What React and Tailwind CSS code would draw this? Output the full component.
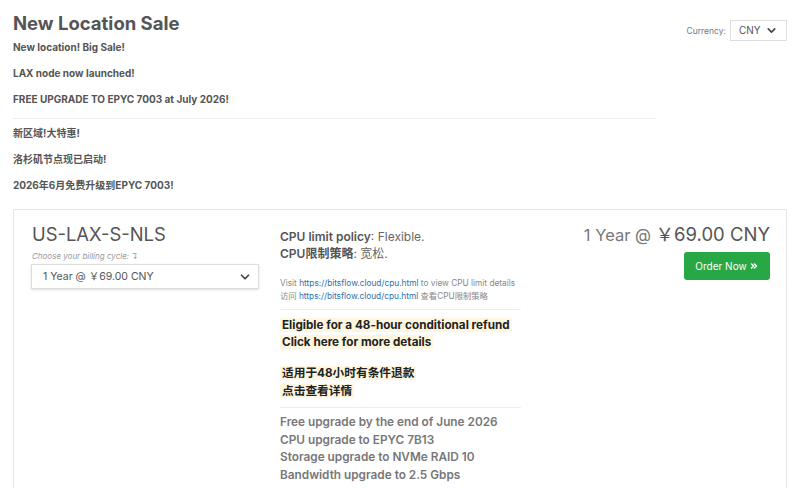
import React from 'react';
import { ChevronDown, ChevronsRight } from 'lucide-react';

const font = { fontFamily: 'Inter, "Noto Sans CJK SC", sans-serif' };

const App = () => {
  return (
    <div className="min-h-screen bg-white text-[#555] px-[13px] pt-[10px] overflow-hidden" style={font}>
      <div className="flex justify-between">
        <div className="w-[643px]">
          <h1 className="text-[18.5px] font-bold leading-[26px] text-[#555]">New Location Sale</h1>
          <div className="text-[10px] font-bold text-[#555] leading-[14px]">
            <p className="mt-[4px]">New location! Big Sale!</p>
            <p className="mt-[12px]">LAX node now launched!</p>
            <p className="mt-[12px]">FREE UPGRADE TO EPYC 7003 at July 2026!</p>
            <hr className="mt-[12px] border-t border-[#eee]" />
            <p className="mt-[7px]">新区域!大特惠!</p>
            <p className="mt-[12px]">洛杉矶节点现已启动!</p>
            <p className="mt-[12px]">2026年6月免费升级到EPYC 7003!</p>
          </div>
        </div>
        <div className="flex items-start gap-[4px] pt-[10px]">
          <span className="text-[8.5px] text-[#777] mt-[5px]">Currency:</span>
          <div className="w-[57px] h-[21px] border border-[#ddd] flex items-center justify-between px-[8px] text-[10px] text-[#555]">
            <span>CNY</span>
            <ChevronDown className="w-[13px] h-[13px] text-[#444]" strokeWidth={3} />
          </div>
        </div>
      </div>

      <div className="mt-[17px] border border-[#e5e5e5] rounded-[2px] pl-[18px] pr-[18px] pt-[11px] pb-[20px] flex">
        <div className="w-[228px] shrink-0 -ml-[1px]">
          <h2 className="text-[18.4px] text-[#555] leading-[26px] ml-[1px]">US-LAX-S-NLS</h2>
          <p className="text-[8px] italic text-[#999] mt-[4px] leading-[10px] ml-[1px]">Choose your billing cycle: ↴</p>
          <div className="mt-[3px] h-[25px] border border-[#ddd] shadow-sm flex items-center justify-between pl-[11px] pr-[6px] text-[10.5px] text-[#555]">
            <span>1 Year @ ￥69.00 CNY</span>
            <ChevronDown className="w-[14px] h-[14px] text-[#444]" strokeWidth={3} />
          </div>
        </div>

        <div className="w-[241px] shrink-0 ml-[21px] pt-[7px]">
          <p className="text-[12px] leading-[17px] text-[#666]">
            <span className="font-semibold text-[#555]">CPU limit policy</span>: Flexible.
          </p>
          <p className="text-[12px] leading-[17px] text-[#666]">
            <span className="font-semibold text-[#555]">CPU限制策略</span>: 宽松.
          </p>
          <div className="text-[8.3px] leading-[13px] text-[#888] mt-[15px]">
            <p>Visit <span className="text-[#2a6fb0]">https://bitsflow.cloud/cpu.html</span> to view CPU limit details</p>
            <p>访问 <span className="text-[#2a6fb0]">https://bitsflow.cloud/cpu.html</span> 查看CPU限制策略</p>
          </div>
          <hr className="mt-[6px] border-t border-[#eee]" />
          <div className="mt-[7px] text-[11.7px] font-bold text-[#222] leading-[17px]">
            <p><span className="bg-[#fff6e0] px-[2px]">Eligible for a 48-hour conditional refund</span></p>
            <p><span className="bg-[#fff6e0] px-[2px]">Click here for more details</span></p>
            <p className="mt-[13px] leading-[18px]"><span className="bg-[#fff6e0] px-[2px]">适用于48小时有条件退款</span></p>
            <p className="leading-[18px]"><span className="bg-[#fff6e0] px-[2px]">点击查看详情</span></p>
          </div>
          <hr className="mt-[7px] border-t border-[#eee]" />
          <div className="mt-[6px] text-[11.8px] font-semibold text-[#777] leading-[17.7px]">
            <p>Free upgrade by the end of June 2026</p>
            <p>CPU upgrade to EPYC 7B13</p>
            <p>Storage upgrade to NVMe RAID 10</p>
            <p>Bandwidth upgrade to 2.5 Gbps</p>
          </div>
        </div>

        <div className="flex-1 flex flex-col items-end pt-[1px] -mr-[2px]">
          <p className="text-[16.5px] leading-[24px] text-[#777]">
            1 Year @ <span className="text-[18.5px] text-[#555]">￥69.00 CNY</span>
          </p>
          <button className="mt-[5px] w-[86px] h-[28px] bg-[#28a745] rounded-[3px] text-white text-[10px] flex items-center justify-center gap-[2px]">
            Order Now
            <ChevronsRight className="w-[10px] h-[10px]" strokeWidth={3.5} />
          </button>
        </div>
      </div>
    </div>
  );
};

export default App;
